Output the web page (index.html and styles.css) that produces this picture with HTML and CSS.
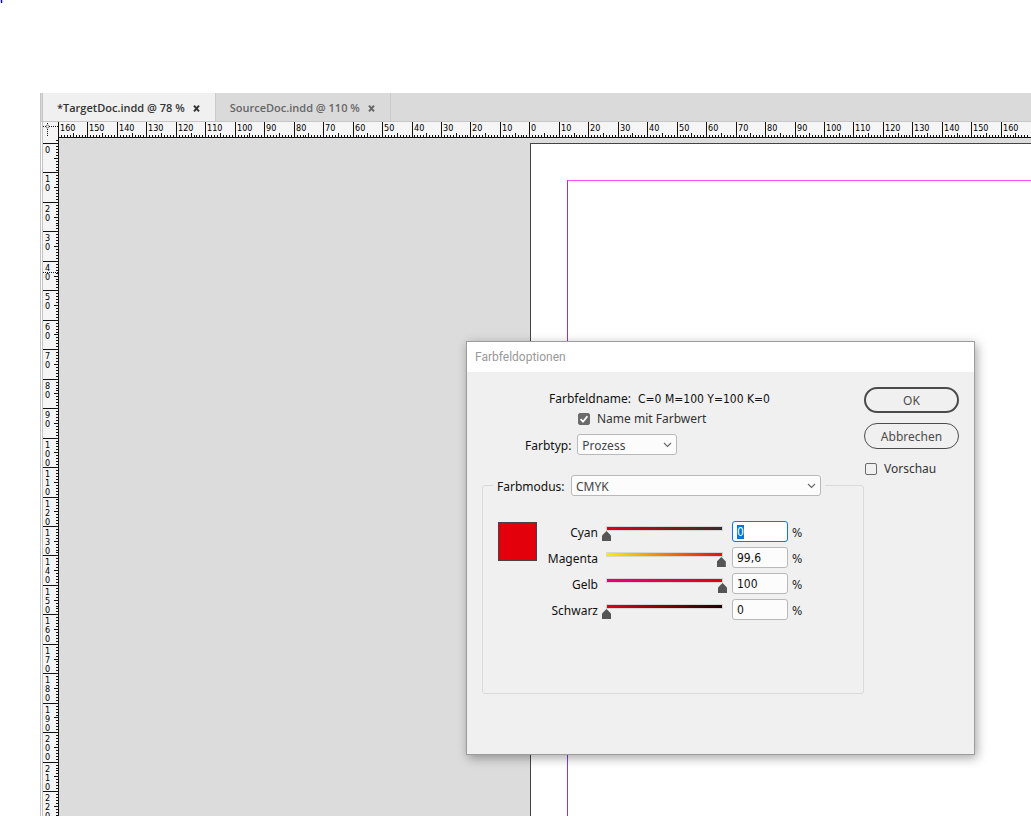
FILE: index.html
```html
<!DOCTYPE html>
<html lang="de">
<head>
<meta charset="utf-8">
<title>TargetDoc.indd</title>
<link rel="stylesheet" href="styles.css">
</head>
<body>
<svg class="corner-mark" width="3" height="3" viewBox="0 0 3 3" aria-hidden="true"><path d="M0 0h3v3H0z" fill="#c5c5ff"/><path d="M1 0h1v3H1z" fill="#0000b8"/></svg>
<main class="workspace">
  <nav class="tabs" aria-label="Dokumente">
    <div class="tab tab-active">
      <span>*TargetDoc.indd @ 78 %</span>
      <button class="close" aria-label="TargetDoc schließen"><svg width="7" height="7" viewBox="0 0 7 7"><path d="M1 0.7l5 5.6M6 0.7L1 6.3" stroke="currentColor" stroke-width="2"/></svg></button>
    </div>
    <div class="tab">
      <span>SourceDoc.indd @ 110 %</span>
      <button class="close" aria-label="SourceDoc schließen"><svg width="7" height="7" viewBox="0 0 7 7"><path d="M1 0.7l5 5.6M6 0.7L1 6.3" stroke="currentColor" stroke-width="2"/></svg></button>
    </div>
  </nav>
  <div class="ruler-row">
    <svg class="origin" width="15" height="16" viewBox="0 0 15 16" aria-hidden="true"><g fill="none" stroke="#111" shape-rendering="crispEdges"><path d="M0 4.5h15" stroke-dasharray="1 1"/><path d="M4.5 1v14" stroke-dasharray="1 1"/></g><circle cx="4.5" cy="4.5" r="1.5" fill="#f5f5f5" stroke="#555" stroke-width=".7"/></svg>
    <svg class="ruler ruler-h" id="ruler-h" height="16"></svg>
  </div>
  <div class="stage">
    <svg class="ruler ruler-v" id="ruler-v" width="16"></svg>
    <div class="pasteboard"><div class="sheet"><div class="margins"></div></div></div>
  </div>
</main>

<section class="dialog" role="dialog" aria-labelledby="dialog-title">
  <h1 class="dialog-title" id="dialog-title">Farbfeldoptionen</h1>
  <form class="dialog-body">
    <div class="options">
      <div class="name-line"><span>Farbfeldname:</span><span class="swatch-name">C=0 M=100 Y=100 K=0</span></div>
      <label class="check check-name"><input type="checkbox" checked><span>Name mit Farbwert</span></label>
      <div class="type-line">
        <label for="type">Farbtyp:</label>
        <select id="type" class="select-type"><option>Prozess</option></select>
      </div>
      <fieldset class="mode">
        <legend><label for="mode">Farbmodus:</label><select id="mode" class="select-mode"><option>CMYK</option></select></legend>
        <div class="mix">
          <div class="swatch"></div>
          <div class="channels">
            <div class="channel"><label for="c">Cyan</label><input class="slider cyan" type="range" value="0" aria-label="Cyan Regler"><input class="value" id="c" value="0"><span>%</span></div>
            <div class="channel"><label for="m">Magenta</label><input class="slider magenta" type="range" value="99" aria-label="Magenta Regler"><input class="value" id="m" value="99,6"><span>%</span></div>
            <div class="channel"><label for="y">Gelb</label><input class="slider yellow" type="range" value="100" aria-label="Gelb Regler"><input class="value" id="y" value="100"><span>%</span></div>
            <div class="channel"><label for="k">Schwarz</label><input class="slider black" type="range" value="0" aria-label="Schwarz Regler"><input class="value" id="k" value="0"><span>%</span></div>
          </div>
        </div>
      </fieldset>
    </div>
    <div class="actions">
      <button type="button" class="pill pill-default">OK</button>
      <button type="button" class="pill">Abbrechen</button>
      <label class="check check-preview"><input type="checkbox"><span>Vorschau</span></label>
    </div>
  </form>
</section>
<script src="rulers.js"></script>
</body>
</html>
```
FILE: styles.css
```css
* { box-sizing: border-box; }

body {
  margin: 0;
  height: 100vh;
  overflow: hidden;
  background: #fff;
  font: 12px/16px "Noto Sans", sans-serif;
  color: #111;
}

button, input, select { font: inherit; color: inherit; margin: 0; }

.corner-mark { position: absolute; top: 0; left: 0; }

.workspace {
  display: flex;
  flex-direction: column;
  height: 100vh;
  padding: 93px 0 0 40px;
}

.tabs, .ruler-row, .stage { border-left: 3px double #c4c4c4; }

.tabs {
  display: flex;
  height: 29px;
  flex: none;
  background: #dadada;
  border-bottom: 1px solid #c6c6c6;
}

.tab {
  display: flex;
  align-items: center;
  gap: 8px;
  padding: 2px 15px 0 14px;
  border-right: 1px solid #cbcbcb;
  font: 600 11px/16px "Open Sans", sans-serif;
  color: #666;
}

.tab-active { background: #f0f0f0; color: #333; }

.close { display: flex; padding: 0; border: 0; background: none; }

.ruler-row { display: flex; flex: none; height: 16px; background: #f5f5f5; }
.origin { flex: none; }
.ruler { display: block; background: #f5f5f5; }
.ruler-h { flex: 1; min-width: 0; }
.ruler text { font: 9px "DejaVu Sans Condensed", "Noto Sans", sans-serif; fill: #000; }

.stage { display: flex; flex: 1; min-height: 0; }
.ruler-v { flex: none; height: 100%; }

.pasteboard {
  flex: 1;
  min-width: 0;
  padding: 5px 0 0 471px;
  background: #dcdcdc;
}

.sheet {
  height: 100%;
  padding: 36px 0 0 36px;
  background: #fff;
  border: solid #444;
  border-width: 1px 0 0 1px;
}

.margins {
  height: 100%;
  border-top: 1px solid #ff4cff;
  border-left: 1px solid #8f35e8;
}

.dialog {
  position: absolute;
  left: 466px;
  top: 341px;
  width: 509px;
  background: #f0f0f0;
  border: 1px solid #9c9c9c;
  box-shadow: 2px 3px 10px rgba(0, 0, 0, .35);
}

.dialog-title {
  margin: 0;
  padding: 0 8px;
  background: #fff;
  color: #999;
  font: 12px/30px Roboto, sans-serif;
}

.dialog-body {
  display: flex;
  justify-content: space-between;
  padding: 15px 15px 60px;
}

.options { width: 382px; }

.name-line { display: flex; gap: 7px; margin: 4px 0 4px 67px; }
.swatch-name { font-family: "DejaVu Sans Condensed", "Noto Sans", sans-serif; }

.check { display: flex; align-items: center; gap: 7px; color: #333; }

.check input {
  appearance: none;
  width: 12px;
  height: 12px;
  border: 1px solid #6b6b6b;
  border-radius: 2px;
}

.check input:checked {
  background: #6b6b6b url("data:image/svg+xml,%3Csvg xmlns='http://www.w3.org/2000/svg' width='10' height='10'%3E%3Cpath d='M1.6 5.2l2.4 2.5L8.4 2.2' fill='none' stroke='%23fff' stroke-width='1.8'/%3E%3C/svg%3E") no-repeat center;
}

.check-name { margin-left: 96px; }
.check-preview { padding-left: 1px; }

.type-line { display: flex; align-items: center; gap: 6px; margin: 7px 0 20px 43px; }
.type-line label, .mode legend label { padding-top: 2px; }

select {
  appearance: none;
  height: 21px;
  padding: 2px 4px 0;
  border: 1px solid #b9b9b9;
  border-radius: 3px;
  color: #444;
  background: #fcfcfc url("data:image/svg+xml,%3Csvg xmlns='http://www.w3.org/2000/svg' width='9' height='6'%3E%3Cpath d='M1 1l3.5 3.5L8 1' fill='none' stroke='%23666' stroke-width='1.1'/%3E%3C/svg%3E") no-repeat right 4px center;
}

.select-type { width: 100px; }
.select-mode { width: 250px; }

.mode {
  margin: 0;
  padding: 0 10px;
  min-height: 219px;
  border: 1px solid #dadada;
  border-radius: 3px;
}

.mode legend {
  display: flex;
  align-items: center;
  justify-content: space-between;
  width: 332px;
  padding: 0 4px;
}

.mix { display: flex; padding: 25px 0 0 5px; gap: 10px; }

.swatch {
  width: 39px;
  height: 39px;
  margin-top: 1px;
  background: #e3000b;
  border: 1px solid #444;
}

.channels { display: flex; flex-direction: column; gap: 2px; }

.channel { display: flex; align-items: center; height: 24px; }
.channel label { width: 51px; text-align: right; white-space: nowrap; }
.channel span { font-family: "DejaVu Sans Condensed", "Noto Sans", sans-serif; }

.slider {
  appearance: none;
  width: 125px;
  height: 16px;
  margin: 0 5px 0 4px;
  background: linear-gradient(90deg, var(--from), var(--to)) no-repeat 5px 2px / 115px 3px, linear-gradient(#d6d6d6, #d6d6d6) no-repeat 4px 1px / 117px 5px;
}

.slider::-webkit-slider-runnable-track { height: 16px; padding-top: 6px; }

.slider::-webkit-slider-thumb {
  appearance: none;
  width: 9px;
  height: 10px;
  background: #555;
  clip-path: polygon(50% 0, 100% 45%, 100% 100%, 0 100%, 0 45%);
}

.cyan { --from: #e3000b; --to: #332c2b; }
.magenta { --from: #ffed00; --to: #e3100c; }
.yellow { --from: #e5007d; --to: #e3000b; }
.black { --from: #e3000b; --to: #1d0000; }

.value {
  align-self: flex-start;
  width: 56px;
  height: 21px;
  margin-right: 4px;
  padding: 0 4px;
  border: 1px solid #b9b9b9;
  border-radius: 3px;
  background: #fcfcfc;
  font-family: "DejaVu Sans Condensed", "Noto Sans", sans-serif;
}

.value:focus { outline: 0; border-color: #1473e6; background: #fff; }
.value::selection { background: #0078d7; color: #fff; }

.actions { display: flex; flex-direction: column; gap: 10px; width: 95px; }

.pill {
  height: 26px;
  padding: 1px 0 0;
  border: 1px solid #4b4b4b;
  border-radius: 13px;
  background: transparent;
  color: #4b4b4b;
}

.pill-default { border-width: 2px; }

.actions .check-preview { margin-top: 2px; }
```
FILE: rulers.js
```javascript
const UNIT = 29.46;
const NS = "http://www.w3.org/2000/svg";

function add(svg, name, attrs, text) {
  const el = document.createElementNS(NS, name);
  for (const key in attrs) el.setAttribute(key, attrs[key]);
  if (text !== undefined) el.textContent = text;
  svg.appendChild(el);
}

function rect(svg, x, y, width, height) {
  add(svg, "rect", { x, y, width, height, fill: "#111" });
}

function drawHorizontal() {
  const svg = document.getElementById("ruler-h");
  const length = svg.clientWidth;
  rect(svg, 0, 15, length, 1);
  for (let i = 0; i * UNIT / 10 < length - 1; i++) {
    const x = Math.round(i * UNIT / 10);
    const h = i % 10 === 0 ? 16 : i % 5 === 0 ? 5 : 3;
    rect(svg, x, 16 - h, 1, h);
    if (i % 10 === 0 && x + 16 < length) add(svg, "text", { x: x + 2, y: 9 }, Math.abs(i - 160));
  }
}

function drawVertical() {
  const svg = document.getElementById("ruler-v");
  const length = svg.clientHeight;
  const zero = 5;
  rect(svg, 15, 0, 1, length);
  for (let i = -1; zero + i * UNIT / 10 < length; i++) {
    const y = Math.round(zero + i * UNIT / 10);
    const w = i % 10 === 0 ? 16 : i % 5 === 0 ? 5 : 3;
    rect(svg, 16 - w, y, w, 1);
    if (i % 10 === 0) {
      String(i).split("").forEach((digit, n) => add(svg, "text", { x: 2, y: y + 10 + n * 9 }, digit));
    }
  }
  add(svg, "path", { d: "M0 134.5h16", stroke: "#111", "stroke-dasharray": "1 1" });
}

drawHorizontal();
drawVertical();
const first = document.getElementById("c");
first.focus();
first.select();
```
